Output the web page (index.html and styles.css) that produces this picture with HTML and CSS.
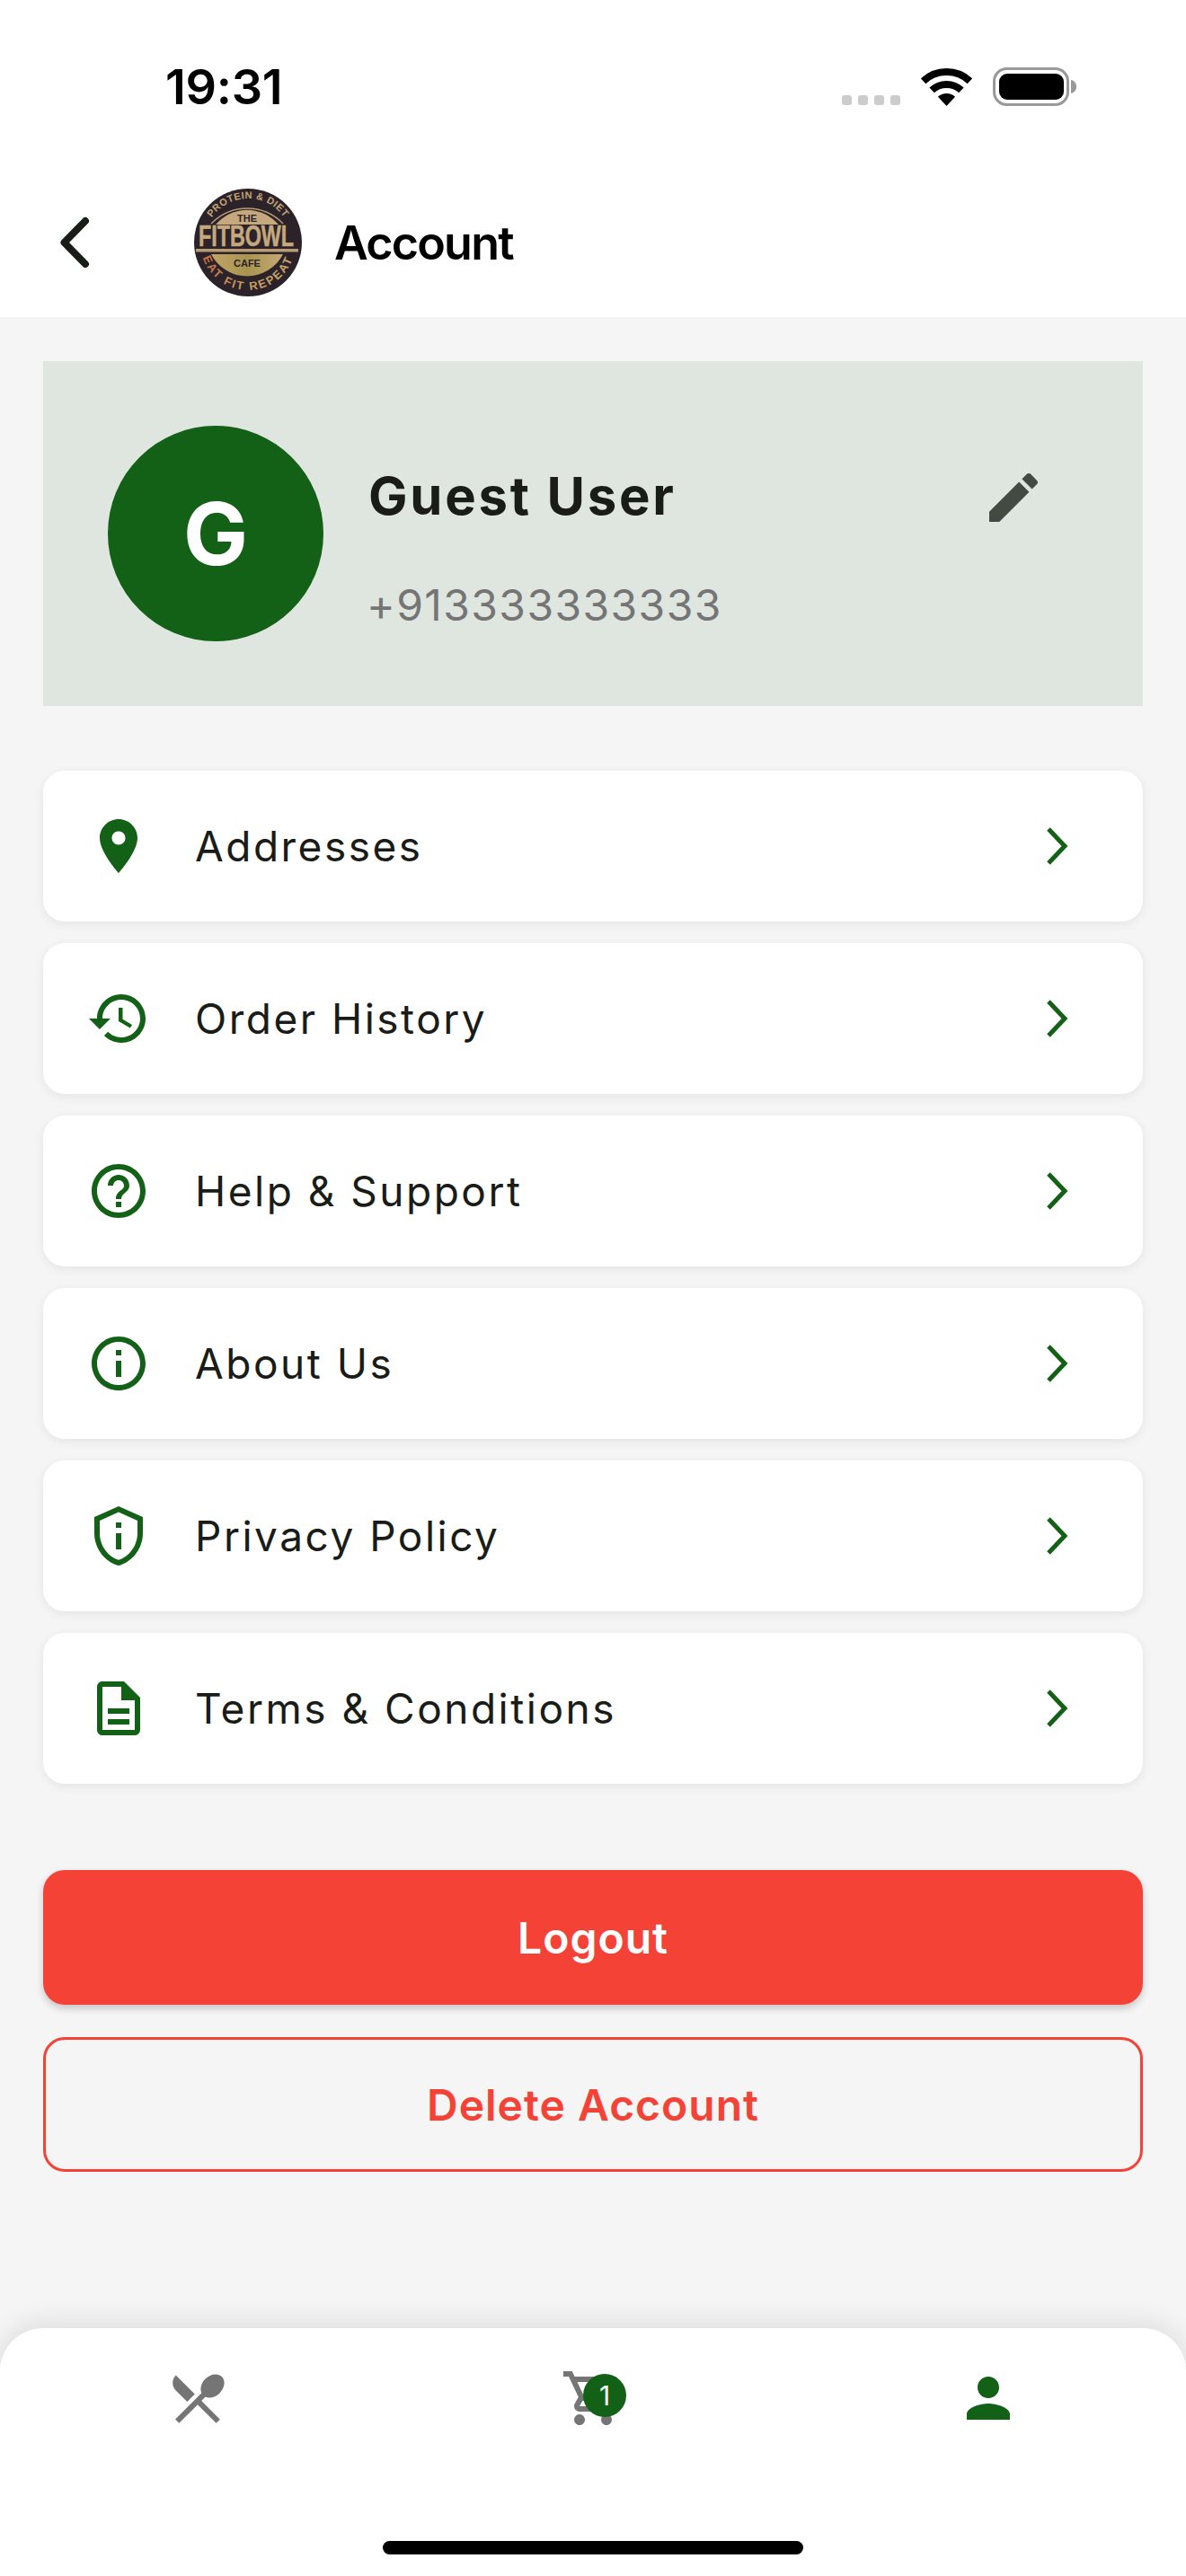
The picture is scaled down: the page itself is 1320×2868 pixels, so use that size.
FILE: index.html
```html
<!DOCTYPE html>
<html>
<head>
  <meta charset="UTF-8">
  <title>Account</title>
  <meta name="viewport" content="width=device-width, initial-scale=1.0">
  <link rel="stylesheet" href="styles.css">
</head>
<body>
  <div class="top">
    <div class="status-bar">
      <span class="time">19:31</span>
      <div class="status-icons">
        <div class="dots"><i></i><i></i><i></i><i></i></div>
        <svg class="wifi" width="57" height="42" viewBox="0 0 57 42">
          <path d="M2.6 14.2A38 38 0 0 1 54.4 14.2" fill="none" stroke="#000" stroke-width="8"/>
          <path d="M12.1 24.45A24 24 0 0 1 44.9 24.45" fill="none" stroke="#000" stroke-width="8"/>
          <path d="M28.5 42L18.95 31.76A14 14 0 0 1 38.05 31.76Z"/>
        </svg>
        <svg class="battery" width="93" height="43" viewBox="0 0 93 43">
          <rect x="1.5" y="1.5" width="82" height="40" rx="14" fill="none" stroke="#999" stroke-width="3"/>
          <rect x="7" y="7" width="72" height="29" rx="9"/>
          <path d="M87 14c3 .5 6 3 6 7.500s-3 7-6 7.500z" fill="#999"/>
        </svg>
      </div>
    </div>
    <header class="app-bar">
      <svg class="back" width="40" height="64" viewBox="0 0 40 64">
        <path d="M31 8L7.500 32L31 56" fill="none" stroke="#1a1c18" stroke-width="8" stroke-linecap="round" stroke-linejoin="round"/>
      </svg>
      <svg class="logo" width="120" height="120" viewBox="0 0 120 120">
        <defs>
          <path id="arc-top" d="M11 60A49 49 0 0 1 109 60"/>
          <path id="arc-bottom" d="M7 60A53 53 0 0 0 113 60"/>
          <linearGradient id="gold" x1="0" y1="0" x2="1" y2="0">
            <stop offset="0" stop-color="#c2a468"/>
            <stop offset=".5" stop-color="#a8944f"/>
            <stop offset="1" stop-color="#c4a873"/>
          </linearGradient>
          <linearGradient id="rim" x1="0" y1="0" x2="1" y2="0">
            <stop offset="0" stop-color="#c8683c"/>
            <stop offset=".4" stop-color="#c49a5c"/>
            <stop offset="1" stop-color="#c9a56e"/>
          </linearGradient>
        </defs>
        <circle cx="60" cy="60" r="60" fill="#2b2329"/>
        <path d="M19 39A55.700 55.700 0 0 1 99 39" fill="none" stroke="#b99c72" stroke-width="1.500"/>
        <path d="M24 40A46 46 0 0 1 94 40Z" fill="#c5a87e"/>
        <path d="M19 73H99A45 45 0 0 1 19 73Z" fill="url(#gold)"/>
        <text class="logo-rim" fill="#c4a576" font-size="11" letter-spacing=".5"><textPath href="#arc-top" startOffset="50%" text-anchor="middle">PROTEIN &amp; DIET</textPath></text>
        <text class="logo-small" x="59" y="37" text-anchor="middle" font-size="11">THE</text>
        <text class="logo-main" transform="translate(58 64) scale(1 1.420)" text-anchor="middle" font-size="23.300">FITBOWL</text>
        <rect x="2" y="67" width="114" height="3.500" fill="#b99c72"/>
        <text class="logo-small" x="59" y="87" text-anchor="middle" font-size="11">CAFE</text>
        <text class="logo-rim" fill="url(#rim)" font-size="13" letter-spacing="2"><textPath href="#arc-bottom" startOffset="50%" text-anchor="middle">EAT FIT REPEAT</textPath></text>
      </svg>
      <h1 class="title">Account</h1>
    </header>
  </div>

  <main class="content">
    <section class="profile">
      <div class="avatar">G</div>
      <div class="profile-info">
        <div class="name-row">
          <span class="name">Guest User</span>
          <svg class="edit" width="72" height="72" viewBox="0 0 24 24"><path d="M3 17.250V21h3.750L17.810 9.940l-3.750-3.750L3 17.250zM20.710 7.040c.39-.39.39-1.020 0-1.410l-2.340-2.340c-.39-.39-1.020-.39-1.410 0l-1.830 1.830 3.750 3.750 1.830-1.830z"/></svg>
        </div>
        <span class="phone">+913333333333</span>
      </div>
    </section>

    <div class="menu">
      <a class="menu-row">
        <svg class="menu-icon" viewBox="0 0 24 24"><path d="M12 2C8.130 2 5 5.130 5 9c0 5.250 7 13 7 13s7-7.750 7-13c0-3.870-3.130-7-7-7zm0 9.500c-1.380 0-2.500-1.120-2.500-2.500s1.120-2.500 2.500-2.500 2.500 1.120 2.500 2.500-1.120 2.500-2.500 2.500z"/></svg>
        <span class="menu-label">Addresses</span>
        <svg class="chevron" width="24" height="42" viewBox="0 0 24 42"><path d="M2 2L20 21L2 40"/></svg>
      </a>
      <a class="menu-row">
        <svg class="menu-icon" viewBox="0 0 24 24"><path d="M13 3c-4.970 0-9 4.030-9 9H1l3.890 3.890.07.14L9 12H6c0-3.870 3.130-7 7-7s7 3.130 7 7-3.130 7-7 7c-1.930 0-3.680-.79-4.940-2.060l-1.420 1.420C8.270 19.990 10.510 21 13 21c4.970 0 9-4.030 9-9s-4.030-9-9-9zm-1 5v5l4.280 2.540.72-1.210-3.500-2.080V8H12z"/></svg>
        <span class="menu-label">Order History</span>
        <svg class="chevron" width="24" height="42" viewBox="0 0 24 42"><path d="M2 2L20 21L2 40"/></svg>
      </a>
      <a class="menu-row">
        <svg class="menu-icon" viewBox="0 0 24 24"><path d="M11 18h2v-2h-2v2zm1-16C6.480 2 2 6.480 2 12s4.480 10 10 10 10-4.480 10-10S17.520 2 12 2zm0 18c-4.410 0-8-3.590-8-8s3.590-8 8-8 8 3.590 8 8-3.590 8-8 8zm0-14c-2.210 0-4 1.790-4 4h2c0-1.100.9-2 2-2s2 .9 2 2c0 2-3 1.750-3 5h2c0-2.250 3-2.500 3-5 0-2.210-1.790-4-4-4z"/></svg>
        <span class="menu-label">Help &amp; Support</span>
        <svg class="chevron" width="24" height="42" viewBox="0 0 24 42"><path d="M2 2L20 21L2 40"/></svg>
      </a>
      <a class="menu-row">
        <svg class="menu-icon" viewBox="0 0 24 24"><path d="M11 7h2v2h-2zm0 4h2v6h-2zm1-9C6.480 2 2 6.480 2 12s4.480 10 10 10 10-4.480 10-10S17.520 2 12 2zm0 18c-4.410 0-8-3.590-8-8s3.590-8 8-8 8 3.590 8 8-3.590 8-8 8z"/></svg>
        <span class="menu-label">About Us</span>
        <svg class="chevron" width="24" height="42" viewBox="0 0 24 42"><path d="M2 2L20 21L2 40"/></svg>
      </a>
      <a class="menu-row">
        <svg class="menu-icon" viewBox="0 0 24 24"><path d="M12 3.190l7 3.110V11c0 4.520-2.980 8.690-7 9.930-4.020-1.240-7-5.410-7-9.930V6.300l7-3.110M12 1L3 5v6c0 5.550 3.840 10.740 9 12 5.160-1.260 9-6.450 9-12V5l-9-4zm-1 6h2v2h-2zm0 4h2v6h-2z"/></svg>
        <span class="menu-label">Privacy Policy</span>
        <svg class="chevron" width="24" height="42" viewBox="0 0 24 42"><path d="M2 2L20 21L2 40"/></svg>
      </a>
      <a class="menu-row">
        <svg class="menu-icon" viewBox="0 0 24 24"><path d="M8 16h8v2H8zm0-4h8v2H8zm6-10H6c-1.100 0-2 .9-2 2v16c0 1.100.89 2 1.990 2H18c1.100 0 2-.9 2-2V8l-6-6zm4 18H6V4h7v5h5v11z"/></svg>
        <span class="menu-label">Terms &amp; Conditions</span>
        <svg class="chevron" width="24" height="42" viewBox="0 0 24 42"><path d="M2 2L20 21L2 40"/></svg>
      </a>
    </div>

    <button class="btn btn-logout">Logout</button>
    <button class="btn btn-delete">Delete Account</button>
  </main>

  <nav class="bottom-nav">
    <div class="nav-items">
      <div class="nav-item">
        <svg class="nav-icon" viewBox="0 0 24 24"><path d="M8.100 13.340l2.830-2.830L3.910 3.500c-1.560 1.560-1.560 4.090 0 5.660l4.190 4.180zm6.780-1.810c1.530.71 3.680.21 5.270-1.380 1.910-1.910 2.280-4.650.81-6.120-1.460-1.460-4.200-1.100-6.120.81-1.590 1.590-2.090 3.740-1.380 5.270L3.700 19.870l1.410 1.410L12 14.410l6.880 6.880 1.410-1.410L13.410 13l1.470-1.470z"/></svg>
      </div>
      <div class="nav-item">
        <div class="cart">
          <svg class="nav-icon" viewBox="0 0 24 24"><path d="M15.550 13c.75 0 1.410-.41 1.750-1.030l3.580-6.490c.37-.66-.11-1.480-.87-1.480H5.210l-.94-2H1v2h2l3.600 7.590-1.350 2.440C4.520 15.370 5.480 17 7 17h12v-2H7l1.100-2h7.450zM6.160 6h12.150l-2.760 5H8.530L6.160 6zM7 18c-1.100 0-1.990.9-1.990 2S5.900 22 7 22s2-.9 2-2-.9-2-2-2zm10 0c-1.100 0-1.990.9-1.990 2s.89 2 1.990 2 2-.9 2-2-.9-2-2-2z"/></svg>
          <span class="badge">1</span>
        </div>
      </div>
      <div class="nav-item">
        <svg class="nav-icon active" viewBox="0 0 24 24"><path d="M12 12c2.210 0 4-1.790 4-4s-1.790-4-4-4-4 1.790-4 4 1.790 4 4 4zm0 2c-2.670 0-8 1.340-8 4v2h16v-2c0-2.660-5.330-4-8-4z"/></svg>
      </div>
    </div>
    <div class="home-indicator"></div>
  </nav>
</body>
</html>
```

FILE: styles.css
```css
* { box-sizing: border-box; }
body {
  margin: 0; width: 1320px; height: 2868px; overflow: hidden;
  display: flex; flex-direction: column;
  font-family: Inter, "Liberation Sans", sans-serif;
  background: #f5f5f5; color: #1a1c18;
}

.top { background: #fff; }
.status-bar {
  height: 190px; padding: 72px 122px 0 184px;
  display: flex; justify-content: space-between; align-items: flex-start;
}
.time { font-size: 54px; line-height: 50px; font-weight: 600; color: #000; letter-spacing: -0.3px; }
.status-icons { display: flex; align-items: flex-end; gap: 23px; margin-top: 3px; }
.dots { display: flex; gap: 7px; margin-bottom: 1px; }
.dots i { width: 11px; height: 11px; border-radius: 3px; background: #ccc; }
.wifi, .battery { display: block; }

.app-bar { height: 163px; padding: 0 0 3px 64px; display: flex; align-items: center; }
.logo { margin-left: 112px; }
.title { margin: 0 0 0 36px; font-size: 52px; font-weight: 600; color: #000; letter-spacing: -1.8px; }
.logo-rim { font-family: "Liberation Sans", sans-serif; font-weight: 700; }
.logo-small { font-family: "Liberation Sans", sans-serif; font-weight: 700; fill: #2b2329; }
.logo-main { font-family: "Liberation Sans", sans-serif; font-weight: 700; fill: #c5a87e; stroke: #c5a87e; stroke-width: .4; }

.content { flex: 1; padding: 49px 48px 0; }

.profile {
  height: 384px; padding: 72px 0 0 72px;
  display: flex; align-items: flex-start; gap: 50px;
  background: #dfe6df;
}
.avatar {
  width: 240px; height: 240px; border-radius: 50%;
  display: flex; align-items: center; justify-content: center;
  background: #126117; color: #fff; font-size: 96px; font-weight: 700;
}
.profile-info { flex: 1; margin-top: 44px; padding-right: 108px; display: flex; flex-direction: column; gap: 55px; }
.name-row { display: flex; align-items: center; justify-content: space-between; height: 72px; }
.name { padding-bottom: 4px; font-size: 58px; font-weight: 700; letter-spacing: 2.800px; }
.edit { fill: #434a42; }
.phone { margin-left: -2px; font-size: 48px; line-height: 58px; color: #757575; letter-spacing: 1.4px; }

.menu { margin-top: 72px; display: flex; flex-direction: column; gap: 24px; }
.menu-row {
  height: 168px; padding: 0 83px 0 48px;
  display: flex; align-items: center; gap: 49px;
  background: #fff; border-radius: 24px;
  box-shadow: 0 3px 12px rgba(0, 0, 0, .07);
}
.menu-icon { width: 72px; height: 72px; fill: #126117; }
.menu-label { flex: 1; font-size: 46px; letter-spacing: 2.5px; }
.chevron { fill: none; stroke: #126117; stroke-width: 5; }

.btn {
  display: block; width: 100%; height: 150px;
  border-radius: 24px; font-family: inherit; font-size: 48px; font-weight: 600; letter-spacing: 1px;
}
.btn-logout {
  margin-top: 96px; border: none; background: #f44336; color: #fff;
  box-shadow: 0 4px 9px rgba(0, 0, 0, .2);
}
.btn-delete { margin-top: 36px; border: 3px solid #f44336; background: transparent; color: #f44336; }

.bottom-nav {
  height: 276px; padding-top: 42px;
  display: flex; flex-direction: column; align-items: center;
  background: #fff; border-radius: 48px 48px 0 0;
  box-shadow: 0 -6px 30px rgba(0, 0, 0, .1);
}
.nav-items { width: 100%; display: grid; grid-template-columns: repeat(3, 1fr); }
.nav-item { display: flex; justify-content: center; }
.nav-icon { display: block; width: 72px; height: 72px; fill: #757575; }
.nav-icon.active { fill: #126117; }
.cart { position: relative; }
.badge {
  position: absolute; left: 25px; top: 9px;
  width: 48px; height: 48px; border-radius: 50%;
  display: flex; align-items: center; justify-content: center;
  background: #126117; color: #fff; font-size: 30px;
}
.home-indicator { width: 468px; height: 15px; margin-top: 123px; border-radius: 8px; background: #000; }
```
